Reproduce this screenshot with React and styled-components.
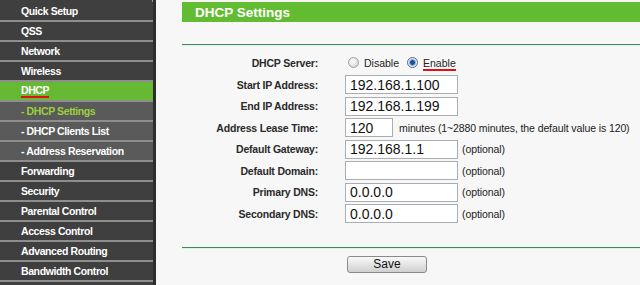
import React, { useState } from 'react';
import styled, { createGlobalStyle } from 'styled-components';

const GlobalStyle = createGlobalStyle`
  html, body {
    margin: 0;
    padding: 0;
    height: 285px;
    overflow: hidden;
    background: #f7f7f7;
    font-family: "Liberation Sans", Arial, sans-serif;
  }
`;

const Page = styled.div`
  display: flex;
  height: 285px;
  overflow: hidden;
`;

const Sidebar = styled.nav`
  width: 153px;
  flex: 0 0 153px;
  background: #3f3f3f;
  border-right: 3px solid #2e2e2e;
  box-shadow: inset -1px 0 #9c9c9c;
  display: flex;
  flex-direction: column;
  padding-top: 2px;
`;

const MenuItem = styled.div`
  height: 18px;
  flex: 0 0 18px;
  border-bottom: 2px solid #8e8e8e;
  padding-left: 21px;
  display: flex;
  align-items: center;
  font-size: 10.5px;
  letter-spacing: -0.4px;
  font-weight: bold;
  color: ${(p) => (p.$sub && p.$active ? '#9ad13c' : '#ffffff')};
  background: ${(p) => (p.$active && !p.$sub ? '#66ba33' : p.$sub ? '#5a5a5a' : '#3f3f3f')};
  white-space: nowrap;
`;

const Underlined = styled.span`
  border-bottom: 2px solid #e0101a;
  line-height: 12px;
`;

const Main = styled.main`
  flex: 1;
  padding: 2px 0 0 26px;
  display: flex;
  flex-direction: column;
`;

const Header = styled.div`
  height: 20px;
  background: #62bc31;
  color: #fff;
  font-weight: bold;
  font-size: 13.5px;
  display: flex;
  align-items: center;
  padding-left: 13px;
`;

const Divider = styled.div`
  height: 1px;
  background: #3d8c57;
  border-bottom: 1px solid #e4efe6;
  margin-top: ${(p) => p.$top}px;
`;

const Form = styled.div`
  display: grid;
  grid-template-columns: 136px 113px auto;
  grid-template-rows: 23px repeat(7, 21.5px);
  column-gap: 27px;
  padding-top: 5px;
  align-items: center;
`;

const Label = styled.div`
  text-align: right;
  font-size: 10.5px;
  letter-spacing: -0.2px;
  font-weight: bold;
  color: #2a2a2a;
  white-space: nowrap;
`;

const Field = styled.div`
  grid-column: ${(p) => (p.$wide ? '2 / 4' : 'auto')};
  display: flex;
  align-items: center;
  gap: 6px;
  white-space: nowrap;
`;

const TextBox = styled.input`
  box-sizing: border-box;
  width: ${(p) => p.$w || 113}px;
  height: 19px;
  border: 1px solid #a8aeb3;
  background: #fff;
  font-family: "Liberation Sans", Arial, sans-serif;
  font-size: 14px;
  color: #111;
  padding: 0 4px;
  margin: 0;
  outline: none;
`;

const Note = styled.span`
  font-size: 10.5px;
  letter-spacing: -0.1px;
  color: #222;
  margin-left: ${(p) => p.$ml || 0}px;
  white-space: nowrap;
`;

const RadioGroup = styled.div`
  display: flex;
  align-items: center;
  font-size: 10.5px;
  color: #222;
  margin-left: 3px;
`;

const Radio = styled.span`
  width: 11px;
  height: 11px;
  box-sizing: border-box;
  border-radius: 50%;
  border: 1px solid ${(p) => (p.$on ? '#4f6f8f' : '#a0a0a0')};
  background: ${(p) =>
    p.$on
      ? 'radial-gradient(circle, #1a4f9a 0 2px, #6a8fc0 2.5px, #e8eef5 4px)'
      : 'radial-gradient(circle at 40% 35%, #fff 0, #d6d6d6 80%)'};
  margin-right: 5px;
  cursor: pointer;
`;

const RadioText = styled.span`
  margin-right: 8px;
  line-height: 12px;
  border-bottom: 2px solid ${(p) => (p.$mark ? '#e0101a' : 'transparent')};
  padding-top: 2px;
`;

const ButtonRow = styled.div`
  padding-left: 165px;
  margin-top: 7px;
`;

const SaveButton = styled.button`
  display: block;
  width: 80px;
  height: 17px;
  border: 1px solid #8a8a8a;
  border-radius: 3px;
  background: linear-gradient(#fafafa, #e2e2e2 55%, #d0d0d0);
  font-family: "Liberation Sans", Arial, sans-serif;
  font-size: 12px;
  color: #111;
  padding: 0;
  line-height: 14px;
`;

const menu = [
  { label: 'Quick Setup' },
  { label: 'QSS' },
  { label: 'Network' },
  { label: 'Wireless' },
  { label: 'DHCP', active: true, mark: true },
  { label: '- DHCP Settings', sub: true, active: true },
  { label: '- DHCP Clients List', sub: true },
  { label: '- Address Reservation', sub: true },
  { label: 'Forwarding' },
  { label: 'Security' },
  { label: 'Parental Control' },
  { label: 'Access Control' },
  { label: 'Advanced Routing' },
  { label: 'Bandwidth Control' },
  { label: '' },
];

const App = () => {
  const [enabled, setEnabled] = useState(true);

  return (
    <Page>
      <GlobalStyle />
      <Sidebar>
        {menu.map((m, i) => (
          <MenuItem key={i} $active={m.active} $sub={m.sub}>
            {m.mark ? <Underlined>{m.label}</Underlined> : m.label}
          </MenuItem>
        ))}
      </Sidebar>
      <Main>
        <Header>DHCP Settings</Header>
        <Divider $top={22} />
        <Form>
          <Label>DHCP Server:</Label>
          <Field $wide>
            <RadioGroup>
              <Radio $on={!enabled} onClick={() => setEnabled(false)} />
              <RadioText>Disable</RadioText>
              <Radio $on={enabled} onClick={() => setEnabled(true)} />
              <RadioText $mark>Enable</RadioText>
            </RadioGroup>
          </Field>

          <Label>Start IP Address:</Label>
          <Field $wide><TextBox defaultValue="192.168.1.100" /></Field>

          <Label>End IP Address:</Label>
          <Field $wide><TextBox defaultValue="192.168.1.199" /></Field>

          <Label>Address Lease Time:</Label>
          <Field $wide>
            <TextBox $w={48} defaultValue="120" />
            <Note>minutes (1~2880 minutes, the default value is 120)</Note>
          </Field>

          <Label>Default Gateway:</Label>
          <Field><TextBox defaultValue="192.168.1.1" /></Field>
          <Note $ml={-23}>(optional)</Note>

          <Label>Default Domain:</Label>
          <Field><TextBox defaultValue="" /></Field>
          <Note $ml={-23}>(optional)</Note>

          <Label>Primary DNS:</Label>
          <Field><TextBox defaultValue="0.0.0.0" /></Field>
          <Note $ml={-23}>(optional)</Note>

          <Label>Secondary DNS:</Label>
          <Field><TextBox defaultValue="0.0.0.0" /></Field>
          <Note $ml={-23}>(optional)</Note>
        </Form>
        <Divider $top={22} />
        <ButtonRow>
          <SaveButton>Save</SaveButton>
        </ButtonRow>
      </Main>
    </Page>
  );
};

export default App;
